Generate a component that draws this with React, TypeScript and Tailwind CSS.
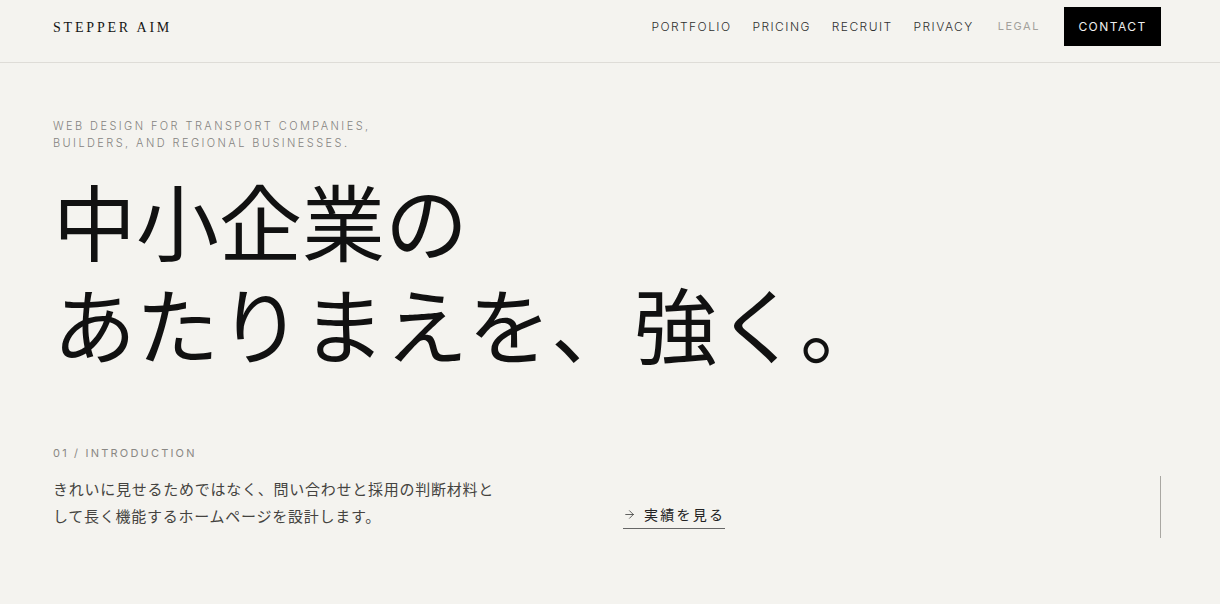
import { ArrowRight } from "lucide-react";

const nav = ["PORTFOLIO", "PRICING", "RECRUIT", "PRIVACY"];

const sans = "font-['Inter','Noto_Sans_CJK_JP',sans-serif]";

export default function App() {
  return (
    <div className={`min-h-[604px] bg-[#f4f3ef] text-[#111] ${sans}`}>
      <header className="flex h-[63px] items-start justify-between border-b border-[#dedcd7] pt-[7px] pl-[53px] pr-[59px]">
        <span className="mt-[10px] font-['Liberation_Serif',serif] text-[14px] tracking-[0.2em] text-[#151515]">
          STEPPER AIM
        </span>
        <nav className="flex items-center">
          {nav.map((item) => (
            <a key={item} className="mr-[21px] text-[12px] font-light tracking-[0.12em] text-[#2f2f2f]">
              {item}
            </a>
          ))}
          <a className="ml-[3px] mr-[24px] text-[11px] tracking-[0.14em] text-[#a3a19c]">LEGAL</a>
          <a className="flex h-[39px] w-[97px] items-center justify-center bg-black text-[12px] tracking-[0.12em] text-[#eeeeee]">
            CONTACT
          </a>
        </nav>
      </header>

      <main className="pl-[53px] pr-[59px]">
        <p className="pt-[55px] text-[11px] font-light leading-[17px] tracking-[0.22em] text-[#85837f]">
          WEB DESIGN FOR TRANSPORT COMPANIES,
          <br />
          BUILDERS, AND REGIONAL BUSINESSES.
        </p>
        <h1 className="mt-[16px] text-[83px] font-normal leading-[103px] text-[#111] font-['Noto_Sans_CJK_JP',sans-serif]">
          中小企業の
          <br />
          あたりまえを、強く。
        </h1>

        <div className="mt-[71px] flex items-start justify-between">
          <div className="flex items-start">
            <div className="w-[570px]">
              <p className="text-[11px] leading-[16px] tracking-[0.2em] text-[#8a8884]">01 / INTRODUCTION</p>
              <p className="mt-[14px] text-[15px] leading-[27px] tracking-[0.05em] text-[#444340] font-['Noto_Sans_CJK_JP',sans-serif]">
                きれいに見せるためではなく、問い合わせと採用の判断材料と
                <br />
                して長く機能するホームページを設計します。
              </p>
            </div>
            <a className="mt-[59px] flex items-center gap-[8px] border-b border-[#666] pb-[4px] text-[14px] leading-[20px] tracking-[0.16em] text-[#222] font-['Noto_Sans_CJK_JP',sans-serif]">
              <ArrowRight className="h-[13px] w-[13px]" strokeWidth={1.3} />
              実績を見る
            </a>
          </div>
          <div className="mt-[31px] h-[62px] w-px bg-[#a9a7a2]" />
        </div>
      </main>
    </div>
  );
}
